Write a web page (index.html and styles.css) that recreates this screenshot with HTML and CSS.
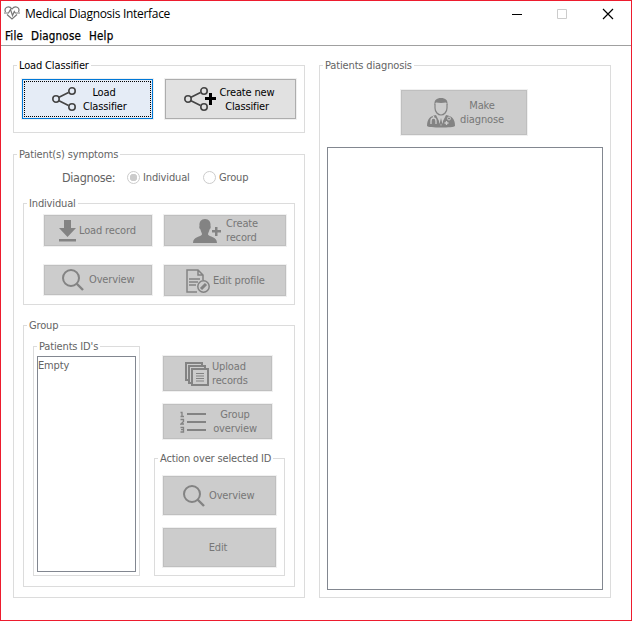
FILE: index.html
```html
<!DOCTYPE html>
<html lang="en">
<head>
<meta charset="utf-8">
<title>Medical Diagnosis Interface</title>
<link rel="stylesheet" href="styles.css">
</head>
<body>
<svg class="defs" width="0" height="0" aria-hidden="true">
  <symbol id="share" viewBox="0 0 24 24">
    <g fill="none" stroke="currentColor" stroke-width="1.6"><path d="M7 10.3 16.5 5.5M7 13.7l9.500 4.800"/><circle cx="4" cy="12" r="3.200"/><circle cx="20" cy="4" r="3.200"/><circle cx="20" cy="20" r="3.200"/></g>
  </symbol>
  <symbol id="search" viewBox="0 0 22 22"><circle cx="9" cy="9" r="8" fill="none" stroke="currentColor" stroke-width="2"/><path d="M14.500 14.500 21 21" stroke="currentColor" stroke-width="2.400"/></symbol>
</svg>
<div class="window">
  <header class="titlebar">
    <svg class="logo" width="16" height="14" viewBox="0 0 16 14" fill="none" stroke="#777" stroke-width="1.200"><path d="M1.500 6C-.5 1 5-.8 8 3c3-3.800 8.500-2 6.500 3M3 8.500l5 4.500 5-4.500"/><path d="M0 7h4.500l2-3.500 2 6 1.800-4 1 1.500H16"/></svg>
    <h1>Medical Diagnosis Interface</h1>
    <svg class="controls" width="102" height="12" viewBox="0 0 102 12" fill="none"><path d="M0 6.500h10" stroke="#000"/><path d="M45.500 1.500h9v9h-9z" stroke="#ccc"/><path d="m91 1 10 10m0-10L91 11" stroke="#000" stroke-width="1.200"/></svg>
  </header>
  <nav class="menubar"><span>File</span><span>Diagnose</span><span>Help</span></nav>
  <main>
    <div class="left">
      <section class="group load">
        <h2>Load Classifier</h2>
        <div class="row">
          <button class="btn focused b-load"><svg width="24" height="24"><use href="#share"/></svg><span>Load<br>Classifier</span></button>
          <button class="btn enabled b-new"><svg width="32" height="24"><use href="#share" width="24" height="24"/><path d="M21 11.500h11M26.500 6v12" stroke="#000" stroke-width="3"/></svg><span>Create new<br>Classifier</span></button>
        </div>
      </section>
      <section class="group symptoms disabled">
        <h2>Patient(s) symptoms</h2>
        <div class="choices">
          <span class="prompt">Diagnose:</span>
          <i class="radio on"></i><span class="c-ind">Individual</span>
          <i class="radio"></i><span>Group</span>
        </div>
        <section class="group individual">
          <h2>Individual</h2>
          <div class="grid">
            <button class="btn b-record"><svg width="17" height="22"><path fill="currentColor" d="M5 0h7v8h5l-8.500 9L0 8h5zM0 19h17v2.500H0z"/></svg><span>Load record</span></button>
            <button class="btn b-create"><svg width="28" height="24"><path fill="currentColor" d="M12 0c4 0 6 3 5.500 7 .8 1-.3 3-1 3.500-.3 2-1.500 3.500-1.500 5 1 2.500 9 2 9 8.500H0c0-6.500 8-6 9-8.500 0-1.500-1.200-3-1.500-5-.8-.5-1.800-2.500-1-3.500C6 3 8 0 12 0zM22 8h2.500v3H28v2.500h-3.500V17H22v-3.500h-3V11h3z"/></svg><span>Create<br>record</span></button>
            <button class="btn b-view"><svg width="22" height="22"><use href="#search"/></svg><span>Overview</span></button>
            <button class="btn b-profile"><svg width="24" height="24" fill="none" stroke="currentColor" stroke-width="1.500"><path d="M11 23H1V1h11l5 5v5M12 1v5h5M3 10h11M3 13h9M3 16h7"/><circle cx="17.500" cy="17.500" r="5.700"/><path d="m15 20 5-5" stroke-width="3"/></svg><span>Edit profile</span></button>
          </div>
        </section>
        <section class="group batch">
          <h2>Group</h2>
          <div class="columns">
            <section class="group ids"><h2>Patients ID's</h2><div class="list">Empty</div></section>
            <div class="tools">
              <button class="btn b-upload"><svg width="24" height="24" fill="none" stroke="currentColor" stroke-width="2"><path d="M4 18H1V1h16v3M7 21H4V4h16v3M7 7h16v16H7z"/><path d="M11 11.500h8M11 14h8M11 16.500h8M11 19h8" stroke-width="1"/></svg><span>Upload<br>records</span></button>
              <button class="btn b-group"><svg width="26" height="22" fill="none" stroke="currentColor"><path d="M7 3h19M7 11h19M7 19h19" stroke-width="2"/><path d="M.5 1.500H2V6M.5 5.500h3.500M.5 8.500h3v2l-2.500 2.500H4M.5 16.500h3v4.500h-3m.5-2.300h2.500" stroke-width="1.300"/></svg><span>Group<br>overview</span></button>
              <section class="group action"><h2>Action over selected ID</h2>
                <button class="btn b-over"><svg width="22" height="22"><use href="#search"/></svg><span>Overview</span></button>
                <button class="btn b-edit"><span>Edit</span></button>
              </section>
            </div>
          </div>
        </section>
      </section>
    </div>
    <section class="group diagnosis disabled">
      <h2>Patients diagnosis</h2>
      <button class="btn b-make"><svg width="28" height="30" viewBox="0 0 28 30"><path d="M8 6v4c0 4 3 7 6 7s6-3 6-7V6" fill="none" stroke="currentColor" stroke-width="1.200"/><path d="M7.500 7C7 2 9.500 0 14 0s7 2 6.500 7L19 4.500c-3 .5-7 .5-10 0z" fill="currentColor"/><path d="M9 17l5 10 5-10c6 1 9 4 9 11-1 2-27 2-28 0 0-7 3-10 9-11z" fill="currentColor"/><path d="M4 26v-3c0-4 5-4 5 0v3M6.500 20v-2M17.500 25h4M19.500 23v4" fill="none" stroke="#ccc" stroke-width="1.300"/><circle cx="22" cy="20.500" r="1.500" fill="none" stroke="#ccc"/><path d="M11.500 18h5l-1 3 .5 3-2 4-2-4 .5-3z" fill="#ccc"/><path d="m14 20-1.200 5L14 28l1.200-3z" fill="currentColor"/></svg><span>Make<br>diagnose</span></button>
      <div class="output"></div>
    </section>
  </main>
</div>
</body>
</html>
```
FILE: styles.css
```css
* { box-sizing: border-box; }
body { margin: 0; background: #fff; font: 11px/14px "DejaVu Sans Condensed", "DejaVu Sans", sans-serif; font-stretch: condensed; letter-spacing: -0.15px; color: #000; }
.defs { display: block; position: absolute; }
.window { width: 632px; height: 621px; border: 1px solid #ed1c2e; }
.titlebar { display: flex; height: 25px; align-items: center; padding-left: 3px; }
.logo { flex: none; margin-top: -1px; }
h1 { margin: 0 0 0 5px; font: 12px/16px "Open Sans", sans-serif; letter-spacing: -0.31px; white-space: nowrap; }
.controls { margin-left: auto; margin-right: 17px; }
.menubar { display: flex; gap: 8px; height: 20px; padding: 3px 4px 0; border-bottom: 1px solid #a0a0a0; font-size: 11.500px; line-height: 14px; letter-spacing: 0.2px; -webkit-text-stroke: 0.25px #000; }
main { display: flex; gap: 14px; padding: 19px 0 0 12px; }
.left { width: 292px; }
.group { border: 1px solid #dcdcdc; }
h2 { width: max-content; height: 13px; margin: -7px 0 0 3px; padding: 0 2px; background: #fff; font: inherit; white-space: nowrap; }
.load { height: 68px; }
.disabled { color: #646464; }
.btn { display: flex; align-items: center; font: inherit; letter-spacing: inherit; line-height: 14px; color: #838383; background: #ccc; border: 1px solid #bfbfbf; outline: 1px solid #f0f0f0; margin: 0; padding: 0; white-space: nowrap; text-align: center; }
.btn svg { flex: none; display: block; }
.disabled .btn span { color: #777; }
.row { display: flex; gap: 12px; padding: 7px 0 0 8px; }
.row .btn { width: 131px; height: 40px; color: #444; }
.btn.focused { background: #e5ecf6; border-color: #0078d7; outline: 1px dotted #000; outline-offset: -3px; box-shadow: 0 0 0 1px #f0f0f0; }
.btn.enabled { background: #e1e1e1; border-color: #adadad; }
.row .btn span { padding-top: 1px; color: #000; }
.b-load { padding-left: 29px; }
.b-load span { width: 42px; margin-left: 7px; }
.b-new { padding-left: 18px; }
.b-new span { width: 58px; margin-left: 2px; }
.symptoms { height: 444px; margin-top: 21px; }
.choices { display: flex; align-items: center; height: 16px; margin: 8px 0 0 48px; }
.choices span { padding-top: 2px; }
.prompt { width: 65px; font-size: 12.500px; letter-spacing: -0.35px; }
.radio { width: 13px; height: 13px; margin-right: 3px; border: 1px solid #ccc; border-radius: 50%; }
.radio.on { background: radial-gradient(circle, #ccc 0 3.500px, #fff 4px); }
.c-ind { width: 60px; }
.individual { width: 272px; height: 102px; margin: 18px 0 0 9px; }
.grid { display: grid; grid-template-columns: 108px 122px; grid-auto-rows: 31px; gap: 19px 12px; padding: 5px 0 0 20px; }
.b-record { padding-left: 14px; }
.b-record span { margin-left: 3px; }
.b-create { padding-left: 28px; }
.b-create span { margin-left: 5px; text-align: left; }
.b-view { height: 30px; padding-left: 17px; }
.b-view span { margin-left: 5px; }
.b-profile { padding-left: 21px; }
.b-profile span { margin-left: 3px; }
.batch { width: 272px; height: 262px; margin: 20px 0 0 9px; }
.columns { display: flex; gap: 14px; padding: 14px 0 0 9px; }
.ids { width: 107px; height: 230px; }
.list { width: 99px; height: 216px; margin: 3px 0 0 3px; padding: 2px 0 0; border: 1px solid #828790; }
.tools { padding-top: 10px; }
.tools > .btn { width: 109px; height: 35px; margin-left: 9px; }
.b-upload { padding-left: 21px; }
.b-upload span { margin-left: 3px; text-align: left; }
.tools > .b-group { margin-top: 13px; padding-left: 16px; }
.b-group span { width: 44px; margin-left: 7px; }
.action { width: 131px; height: 118px; margin-top: 19px; }
.action .btn { width: 113px; height: 39px; margin: 11px 0 0 8px; padding-left: 19px; }
.b-over span { margin-left: 4px; }
.action .b-edit { margin-top: 13px; padding: 0 3px 0 0; justify-content: center; }
.diagnosis { width: 292px; height: 533px; }
.b-make { width: 126px; height: 45px; margin: 18px 0 0 81px; padding-left: 25px; }
.b-make span { width: 44px; margin-left: 5px; }
.output { width: 276px; height: 443px; margin: 12px 0 0 7px; border: 1px solid #828790; }
```
